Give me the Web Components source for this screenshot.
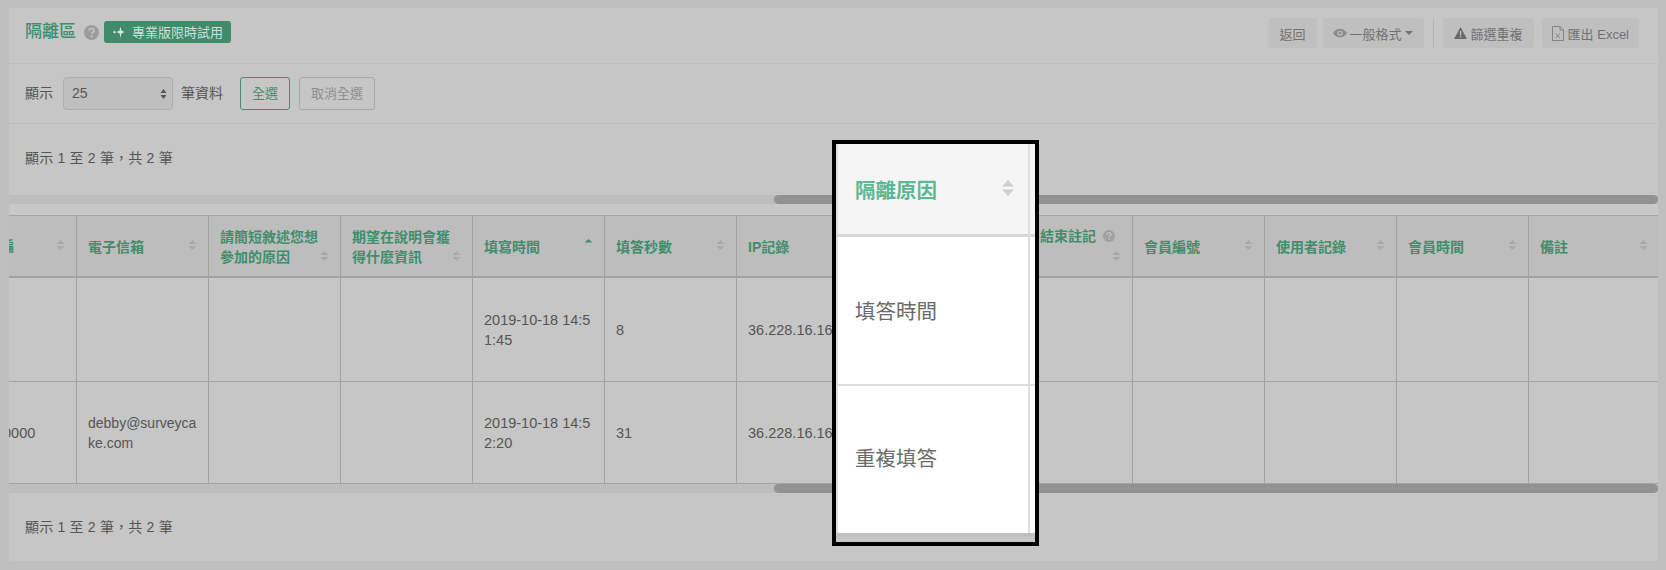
<!DOCTYPE html>
<html lang="zh-Hant">
<head>
<meta charset="utf-8">
<title>隔離區</title>
<style>
  html, body { margin: 0; height: 570px; overflow: hidden; background: #bfbfbf; }
  body { font-family: "Liberation Sans", "Noto Sans CJK TC", sans-serif; color: #555; }
</style>
</head>
<body>
<quarantine-page></quarantine-page>

<script>
const ICONS = {
  help: '<svg width="15" height="15" viewBox="0 0 14 14"><circle cx="7" cy="7" r="7" fill="#9c9c9c"/><path d="M4.800 5.400c0-1.300 1-2.100 2.300-2.100s2.200.8 2.200 1.900c0 1.600-2 1.600-2 3" fill="none" stroke="#c6c6c6" stroke-width="1.500"/><circle cx="7.200" cy="10.400" r=".95" fill="#c6c6c6"/></svg>',
  helpSmall: '<svg width="12" height="12" viewBox="0 0 14 14"><circle cx="7" cy="7" r="7" fill="#a0a0a0"/><path d="M4.800 5.400c0-1.300 1-2.100 2.300-2.100s2.200.8 2.200 1.900c0 1.600-2 1.600-2 3" fill="none" stroke="#c6c6c6" stroke-width="1.500"/><circle cx="7.200" cy="10.400" r=".95" fill="#c6c6c6"/></svg>',
  sparkle: '<svg width="13" height="14" viewBox="0 0 13 14" fill="#d9e5de"><path d="M8.500 1.500l.9 4.100 3.100 1.400-3.100 1.400-.9 4.600-.9-4.600L4.500 7l3.100-1.400z"/><path d="M2.500 5.300l.6 1.200 1.400.6-1.400.6-.6 1.300-.6-1.300L.5 7.100l1.400-.6z"/></svg>',
  eye: '<svg width="14" height="10" viewBox="0 0 16 11"><path d="M0 5.500C2 2 5 .5 8 .5s6 1.500 8 5c-2 3.500-5 5-8 5s-6-1.500-8-5z" fill="#8a8a8a"/><circle cx="8" cy="5.500" r="3" fill="#c4c4c4"/><circle cx="8" cy="5.500" r="1.700" fill="#8a8a8a"/></svg>',
  warn: '<svg width="13" height="12" viewBox="0 0 14 13"><path d="M7 0l7 13H0z" fill="#6a6a6a"/><rect x="6.300" y="4.300" width="1.400" height="4.700" fill="#c4c4c4"/><rect x="6.300" y="10" width="1.400" height="1.500" fill="#c4c4c4"/></svg>',
  excel: '<svg width="12" height="15" viewBox="0 0 12 15" fill="none" stroke="#858585"><path d="M.5.500h7.500l3.500 3.500v10.500H.5z"/><path d="M8 .5V4h3.500"/><path d="M3.800 7.500l4 4.500M7.800 7.500l-4 4.500"/></svg>'
};

// sort arrows used in the table heads
function sortArrows(active = false) {
  if (active) return `<svg width="9" height="12" viewBox="0 0 9 12"><path d="M.5 4.500L4.500 1l4 3.500z" fill="#3f8e6c"/></svg>`;
  return `<svg width="9" height="12" viewBox="0 0 9 12" fill="#a9a9a9"><path d="M.5 5L4.500 1l4 4z"/><path d="M.5 7l4 4 4-4z"/></svg>`;
}

class QuarantineHeader extends HTMLElement {
  constructor() {
    super();
    this.attachShadow({ mode: 'open' });
    this.shadowRoot.innerHTML = `
      <style>
        :host { display: flex; align-items: center; justify-content: space-between; height: 55px; padding: 0 19px 0 16px; border-bottom: 1px solid #bdbdbd; }
        .left, .right { display: flex; align-items: center; }
        .left { margin-bottom: 8px; }
        h1 { margin: 0; font-size: 17px; font-weight: 500; color: #3f8e6c; line-height: 1; }
        .help { margin: 1px 5px 0 8px; display: flex; }
        .badge { display: flex; align-items: center; gap: 7px; height: 22px; padding: 0 8px; background: #3f8c6b; border-radius: 3px; color: #d0dfd7; font-size: 13px; }
        .right { gap: 6px; margin-bottom: 5px; }
        .btn { display: flex; align-items: center; height: 30px; padding: 0 11px; gap: 4px; background: #bfbfbf; border-radius: 3px; font-size: 13px; color: #727272; white-space: nowrap; }
        .btn.eye { padding-left: 10px; gap: 3px; }
        .btn.xls { padding: 0 10px; margin-left: 2px; }
        .caret { width: 0; height: 0; border: 4px solid transparent; border-top-color: #727272; border-bottom: 0; }
        .sep { width: 1px; height: 28px; background: #b2b2b2; margin: 0 3px; }
      </style>
      <div class="left">
        <h1>隔離區</h1>
        <span class="help">${ICONS.help}</span>
        <span class="badge">${ICONS.sparkle}專業版限時試用</span>
      </div>
      <div class="right">
        <span class="btn">返回</span>
        <span class="btn eye">${ICONS.eye}一般格式<i class="caret"></i></span>
        <span class="sep"></span>
        <span class="btn">${ICONS.warn}篩選重複</span>
        <span class="btn xls">${ICONS.excel}匯出 Excel</span>
      </div>`;
  }
}

class QuarantineToolbar extends HTMLElement {
  constructor() {
    super();
    this.attachShadow({ mode: 'open' });
    this.shadowRoot.innerHTML = `
      <style>
        :host { display: flex; align-items: center; height: 59px; padding: 0 16px; font-size: 14px; color: #555; border-bottom: 1px solid #bdbdbd; }
        .select { display: flex; align-items: center; justify-content: space-between; width: 110px; height: 33px; box-sizing: border-box; margin: 0 8px 0 10px; padding: 0 5px 2px 8px; background: #bfbfbf; border: 1px solid #aeaeae; border-radius: 4px; font-size: 14px; }
        .select svg { margin-top: 2px; }
        .label { margin-bottom: 3px; }
        button { height: 33px; box-sizing: border-box; padding: 0 11px 2px; background: transparent; border-radius: 3px; font: inherit; font-size: 13px; }
        .all { margin-left: 17px; color: #3f8e6c; border: 1px solid #3f8e6c; }
        .none { margin-left: 9px; color: #8f8f8f; border: 1px solid #a8a8a8; }
      </style>
      <span class="label">顯示</span>
      <span class="select">25<svg width="7" height="12" viewBox="0 0 7 12" fill="#555"><path d="M.5 5l3-4 3 4zM.5 7l3 4 3-4z"/></svg></span>
      <span class="label">筆資料</span>
      <button class="all">全選</button>
      <button class="none">取消全選</button>`;
  }
}

class PageInfo extends HTMLElement {
  constructor() {
    super();
    this.attachShadow({ mode: 'open' });
    this.shadowRoot.innerHTML = `
      <style>
        :host { display: flex; align-items: center; box-sizing: border-box; padding: 0 16px; font-size: 14px; letter-spacing: .2px; color: #555; }
      </style>
      <slot></slot>`;
  }
}

class ScrollTrack extends HTMLElement {
  constructor() {
    super();
    this.attachShadow({ mode: 'open' });
    this.shadowRoot.innerHTML = `
      <style>
        :host { display: flex; justify-content: flex-end; height: 9px; background: #bdbdbd; }
        div { width: 884px; height: 100%; background: #929292; border-radius: 5px; }
      </style>
      <div></div>`;
  }
}

class ResponseTable extends HTMLElement {
  constructor() {
    super();
    this.attachShadow({ mode: 'open' });
    const heads = [
      ['', 68], ['電子信箱', 132], ['請簡短敘述您想<br>參加的原因', 132, 'low'], ['期望在說明會獲<br>得什麼資訊', 132, 'low'],
      ['填寫時間', 132, 'active'], ['填答秒數', 132], ['IP記錄', 132], ['隔離原因', 132],
      [`<span class="shift">結束註記${ICONS.helpSmall}</span>`, 132, 'low'], ['會員編號', 132], ['使用者記錄', 132], ['會員時間', 132], ['備註', 130]
    ];
    const rows = [
      ['', '', '', '', '2019-10-18 14:5<br>1:45', '8', '36.228.16.167', '', '', '', '', '', ''],
      ['<span class="cut">0000</span>', '<span class="mail">debby@surveyca<br>ke.com</span>', '', '', '2019-10-18 14:5<br>2:20', '31', '36.228.16.167', '', '', '', '', '', '']
    ];
    const th = heads.map(([text, w, kind], i) => {
      const first = i === 0 ? '<span class="cut-head">編</span>' : '';
      return `<div class="th ${kind || ''}" style="width:${w}px">${first}<span class="label">${text}</span>${sortArrows(kind === 'active')}</div>`;
    }).join('');
    const tr = rows.map((row, r) => `<div class="tr r${r}">${row.map((text, i) =>
      `<div class="td" style="width:${heads[i][1]}px"><span>${text}</span></div>`).join('')}</div>`).join('');
    this.shadowRoot.innerHTML = `
      <style>
        :host { display: block; overflow: hidden; font-size: 14.500px; color: #555; }
        .thead, .tr { display: flex; }
        .thead { height: 60px; background: #bdbdbd; border-top: 1px solid #a6a6a6; border-bottom: 2px solid #a3a3a3; }
        .th { position: relative; flex: none; box-sizing: border-box; display: flex; align-items: center; justify-content: space-between; padding: 0 11px; border-right: 1px solid #a0a0a0; font-size: 14px; font-weight: 700; color: #3f8e6c; line-height: 20px; white-space: nowrap; }
        .th .label { margin-top: 1px; }
        .th.low > svg { align-self: flex-end; margin-bottom: 14px; }
        .th.active > svg { align-self: flex-start; margin-top: 22px; }
        .th:not(.low):not(.active) > svg { margin-bottom: 2px; }
        .th:last-child { border-right: 0; }
        .shift { position: absolute; left: 39px; top: 10px; display: flex; align-items: center; gap: 7px; }
        .cut-head { position: absolute; left: -9px; top: 20px; }
        .tr { height: 103px; }
        .tr.r1 { height: 101px; border-top: 1px solid #a3a3a3; border-bottom: 1px solid #a3a3a3; }
        .td { flex: none; box-sizing: border-box; display: flex; align-items: center; padding: 0 11px; border-right: 1px solid #a0a0a0; line-height: 20px; white-space: nowrap; }
        .td:last-child { border-right: 0; }
        .cut { margin-left: -17px; display: block; }
        .mail { font-size: 14px; }
      </style>
      <div class="thead">${th}</div>
      ${tr}`;
  }
}

class ColumnCallout extends HTMLElement {
  constructor() {
    super();
    this.attachShadow({ mode: 'open' });
    this.shadowRoot.innerHTML = `
      <style>
        :host { position: absolute; left: 832px; top: 140px; width: 207px; height: 406px; box-sizing: border-box; border: 4px solid #000; background: #fff; display: flex; flex-direction: column; font-size: 20.500px; color: #6b6b6b; overflow: hidden; }
        .cell { display: flex; align-items: center; flex: none; padding: 0 17px; box-sizing: border-box; border-left: 2px solid #ddd; }
        .head { height: 93px; justify-content: space-between; background: #f5f5f5; color: #5cb893; font-weight: 700; border-bottom: 3px solid #d6d6d6; padding-right: 20px; }
        .row1 { height: 149px; padding-bottom: 2px; border-bottom: 2px solid #dcdcdc; }
        .row2 { height: 147px; padding-bottom: 5px; }
        .foot { flex: 1; background: linear-gradient(#bdbdbd, #cacaca); border: 0; }
        .head svg { margin-bottom: 2px; }
        .line { position: absolute; top: 0; bottom: 9px; right: 5px; width: 2px; background: #dedede; }
      </style>
      <div class="cell head"><span>隔離原因</span><svg width="14" height="18" viewBox="0 0 14 18" fill="#cfcfcf"><path d="M1 7.500L7 1l6 6.500z"/><path d="M1 10.500L7 17l6-6.500z"/></svg></div>
      <div class="cell row1"><span>填答時間</span></div>
      <div class="cell row2"><span>重複填答</span></div>
      <div class="cell foot"></div>
      <div class="line"></div>`;
  }
}

class QuarantinePage extends HTMLElement {
  constructor() {
    super();
    this.attachShadow({ mode: 'open' });
    this.shadowRoot.innerHTML = `
      <style>
        :host { display: block; position: relative; height: 570px; padding: 8px 8px 9px 9px; box-sizing: border-box; }
        .panel { height: 100%; display: flex; flex-direction: column; background: #c6c6c6; }
        .top-info { height: 71px; padding-bottom: 6px; }
        .gap { height: 11px; background: #c8c8c8; }
        .foot-info { flex: 1; padding-bottom: 2px; }
      </style>
      <div class="panel">
        <quarantine-header></quarantine-header>
        <quarantine-toolbar></quarantine-toolbar>
        <page-info class="top-info">顯示 1 至 2 筆，共 2 筆</page-info>
        <scroll-track></scroll-track>
        <div class="gap"></div>
        <response-table></response-table>
        <scroll-track></scroll-track>
        <page-info class="foot-info">顯示 1 至 2 筆，共 2 筆</page-info>
      </div>
      <column-callout></column-callout>`;
  }
}

customElements.define('quarantine-header', QuarantineHeader);
customElements.define('quarantine-toolbar', QuarantineToolbar);
customElements.define('page-info', PageInfo);
customElements.define('scroll-track', ScrollTrack);
customElements.define('response-table', ResponseTable);
customElements.define('column-callout', ColumnCallout);
customElements.define('quarantine-page', QuarantinePage);
</script>
</body>
</html>
